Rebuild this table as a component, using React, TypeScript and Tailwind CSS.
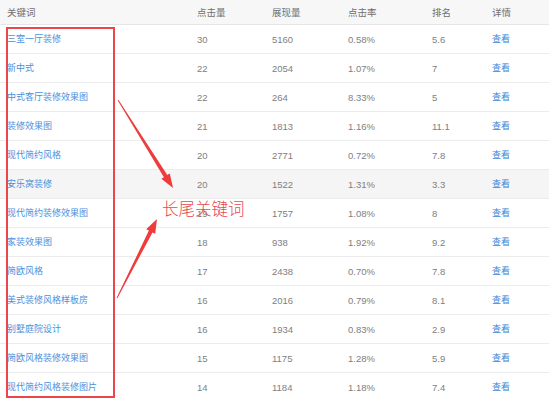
import React from 'react';

const rows = [
  { kw: '三室一厅装修', clicks: 30, views: 5160, ctr: '0.58%', rank: '5.6' },
  { kw: '新中式', clicks: 22, views: 2054, ctr: '1.07%', rank: '7' },
  { kw: '中式客厅装修效果图', clicks: 22, views: 264, ctr: '8.33%', rank: '5' },
  { kw: '装修效果图', clicks: 21, views: 1813, ctr: '1.16%', rank: '11.1' },
  { kw: '现代简约风格', clicks: 20, views: 2771, ctr: '0.72%', rank: '7.8' },
  { kw: '安乐窝装修', clicks: 20, views: 1522, ctr: '1.31%', rank: '3.3', hover: true },
  { kw: '现代简约装修效果图', clicks: 19, views: 1757, ctr: '1.08%', rank: '8' },
  { kw: '家装效果图', clicks: 18, views: 938, ctr: '1.92%', rank: '9.2' },
  { kw: '简欧风格', clicks: 17, views: 2438, ctr: '0.70%', rank: '7.8' },
  { kw: '美式装修风格样板房', clicks: 16, views: 2016, ctr: '0.79%', rank: '8.1' },
  { kw: '别墅庭院设计', clicks: 16, views: 1934, ctr: '0.83%', rank: '2.9' },
  { kw: '简欧风格装修效果图', clicks: 15, views: 1175, ctr: '1.28%', rank: '5.9' },
  { kw: '现代简约风格装修图片', clicks: 14, views: 1184, ctr: '1.18%', rank: '7.4' },
];

const cols = 'grid grid-cols-[190px_75px_76px_84px_60px_1fr] items-center pl-[7px] pt-[2px]';

export default function App() {
  return (
    <div
      className="relative h-[400px] w-[549px] overflow-hidden bg-white text-[9.5px] text-[#808080]"
      style={{ fontFamily: '"Liberation Sans", "Noto Sans CJK SC", sans-serif' }}
    >
      {/* Header */}
      <div className={`${cols} h-[25px] border-b border-[#e6e6e6] bg-[#f7f7f7] text-[#6f6f6f]`}>
        <span>关键词</span>
        <span>点击量</span>
        <span>展现量</span>
        <span>点击率</span>
        <span>排名</span>
        <span>详情</span>
      </div>

      {/* Rows */}
      {rows.map((r) => (
        <div
          key={r.kw}
          className={`${cols} h-[29px] border-b border-[#ececec] ${r.hover ? 'bg-[#f5f5f5]' : ''}`}
        >
          <span className="text-[9px] text-[#4a90dc]">{r.kw}</span>
          <span>{r.clicks}</span>
          <span>{r.views}</span>
          <span>{r.ctr}</span>
          <span>{r.rank}</span>
          <span className="text-[9px] text-[#3b87d6]">查看</span>
        </div>
      ))}

      {/* Annotation: red box around keyword column */}
      <div className="absolute left-[6px] top-[27px] h-[371px] w-[109px] border-2 border-[#e9474c]" />

      {/* Annotation: arrows */}
      <svg className="absolute left-0 top-0" width="549" height="400" viewBox="0 0 549 400">
        <polygon
          fill="#ef3b3b"
          points="118.4,99.7 167.3,175 169.8,173.4 173,188 161.4,178.8 163.9,177.2 117.6,100.3"
        />
        <polygon
          fill="#ef3b3b"
          points="116.6,297.8 148.9,230.6 146.2,229.2 157,219 155.2,233.8 152.5,232.4 117.4,298.2"
        />
      </svg>

      {/* Annotation: label */}
      <div
        className="absolute left-[162px] top-[200px] text-[16.5px] font-light leading-none text-[#e8474d]"
        style={{ fontFamily: '"Noto Sans CJK SC", sans-serif' }}
      >
        长尾关键词
      </div>
    </div>
  );
}
